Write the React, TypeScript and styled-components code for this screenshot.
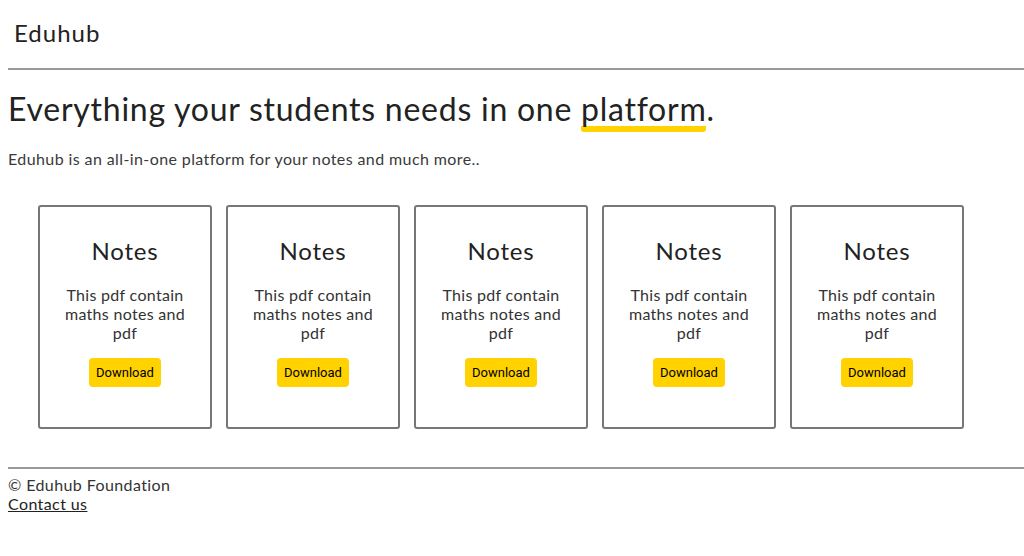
import React from "react";
import styled, { createGlobalStyle } from "styled-components";

const Global = createGlobalStyle`
  html, body { margin: 0; padding: 0; background: #fff; }
  body { font-family: "Lato", "Noto Sans", sans-serif; color: #333; overflow: hidden; }
`;

const Page = styled.div`
  padding: 8px 0 8px 8px;
`;

const Header = styled.header`
  display: flex;
  align-items: center;
  height: 60px;
  padding-left: 6px;
`;

const Brand = styled.div`
  font-size: 24px;
  color: #222;
  margin-top: -12px;
  letter-spacing: 1px;
`;

const Rule = styled.div`
  border-top: 2px solid #999;
  height: 0;
`;

const Hero = styled.section`
  padding-top: 19px;
`;

const Title = styled.h1`
  margin: 0;
  font-size: 32px;
  font-weight: 400;
  color: #222;
  line-height: 40px;
  letter-spacing: 0.75px;
`;

const Mark = styled.span`
  display: inline-block;
  border-bottom: 6px solid #ffd200;
  border-radius: 3px;
  line-height: 34px;
`;

const Lead = styled.p`
  margin: 17px 0 0;
  font-size: 16px;
  line-height: 20px;
  letter-spacing: 0.4px;
  color: #3a3a3a;
`;

const Cards = styled.div`
  display: flex;
  gap: 14px;
  padding: 36px 0 0 30px;
`;

const Card = styled.div`
  width: 142px;
  height: 220px;
  border: 2px solid #777;
  border-radius: 3px;
  display: flex;
  flex-direction: column;
  align-items: center;
  text-align: center;
  padding: 0 14px;
  box-sizing: content-box;
`;

const CardTitle = styled.h2`
  font-size: 24px;
  font-weight: 400;
  color: #222;
  margin: 29px 0 0;
  line-height: 30px;
  letter-spacing: 0.8px;
`;

const CardText = styled.p`
  margin: 19px 0 0;
  font-size: 16px;
  line-height: 19px;
  letter-spacing: 0.3px;
`;

const Button = styled.button`
  margin-top: 16px;
  background: #ffd200;
  border: none;
  border-radius: 4px;
  height: 29px;
  padding: 0 7px;
  font-family: "Roboto", "Liberation Sans", sans-serif;
  font-size: 13px;
  color: #000;
`;

const Footer = styled.footer`
  margin-top: 38px;
`;

const FooterText = styled.div`
  font-size: 16px;
  line-height: 19px;
  padding-top: 6px;
  letter-spacing: 0.4px;
`;

const Link = styled.a`
  color: #222;
  font-size: 16px;
  line-height: 19px;
  text-decoration: underline;
  letter-spacing: 0.4px;
`;

export default function App() {
  return (
    <Page>
      <Global />
      <Header>
        <Brand>Eduhub</Brand>
      </Header>
      <Rule />
      <Hero>
        <Title>
          Everything your students needs in one <Mark>platform</Mark>.
        </Title>
        <Lead>Eduhub is an all-in-one platform for your notes and much more..</Lead>
      </Hero>
      <Cards>
        {[0, 1, 2, 3, 4].map((i) => (
          <Card key={i}>
            <CardTitle>Notes</CardTitle>
            <CardText>This pdf contain maths notes and pdf</CardText>
            <Button>Download</Button>
          </Card>
        ))}
      </Cards>
      <Footer>
        <Rule />
        <FooterText>© Eduhub Foundation</FooterText>
        <Link href="#">Contact us</Link>
      </Footer>
    </Page>
  );
}
